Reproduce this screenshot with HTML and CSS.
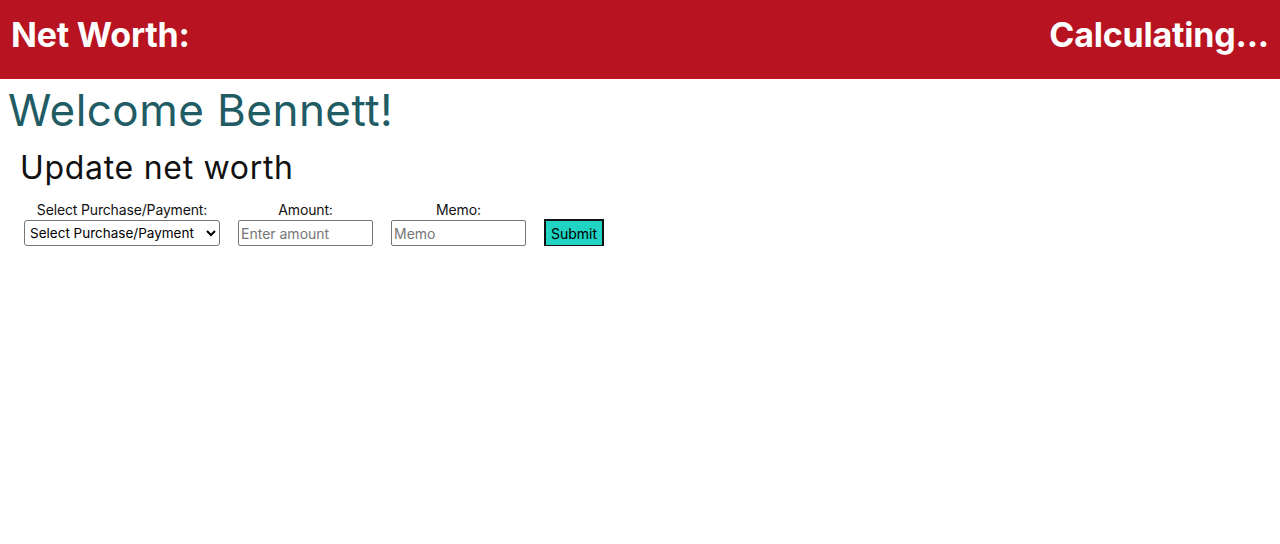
FILE: index.html
```html
<!DOCTYPE html>
<html>
<head>
<meta charset="utf-8">
<link rel="stylesheet" href="styles.css">
</head>
<body>
<header class="topbar">
  <h1 class="topbar-title">Net Worth:</h1>
  <h1 class="topbar-value">Calculating...</h1>
</header>
<main class="content">
  <h1 class="welcome">Welcome Bennett!</h1>
  <section class="update">
    <h2 class="update-title">Update net worth</h2>
    <form class="form">
      <div class="field">
        <label class="field-label">Select Purchase/Payment:</label>
        <select class="select">
          <option>Select Purchase/Payment</option>
        </select>
      </div>
      <div class="field">
        <label class="field-label">Amount:</label>
        <input class="input" type="text" placeholder="Enter amount">
      </div>
      <div class="field">
        <label class="field-label">Memo:</label>
        <input class="input" type="text" placeholder="Memo">
      </div>
      <div class="field field-submit">
        <button class="submit" type="button">Submit</button>
      </div>
    </form>
  </section>
</main>
</body>
</html>
```

FILE: styles.css
```css
html, body {
  margin: 0;
  padding: 0;
  background: #ffffff;
  font-family: Inter, "Liberation Sans", sans-serif;
}

.topbar {
  display: flex;
  justify-content: space-between;
  align-items: center;
  box-sizing: border-box;
  height: 79px;
  padding: 0 11px 10px 11px;
  background: #b71320;
  color: #ffffff;
}

.topbar-title,
.topbar-value {
  margin: 0;
  font-size: 34px;
  line-height: 40px;
  font-weight: 700;
  letter-spacing: -0.2px;
}

.content {
  padding: 0 8px;
}

.welcome {
  margin: 5px 0 0 0;
  font-size: 44px;
  font-weight: 400;
  color: #215b64;
  line-height: 52px;
  letter-spacing: 0.45px;
}

.update {
  padding: 0 12px;
}

.update-title {
  margin: 12px 0 0 0;
  font-size: 32px;
  font-weight: 400;
  color: #111111;
  line-height: 40px;
  letter-spacing: 0.7px;
}

.form {
  display: flex;
  align-items: flex-end;
  gap: 18px;
  margin-top: 13px;
  padding-left: 4px;
}

.field {
  display: flex;
  flex-direction: column;
  align-items: center;
}

.field-label {
  font-size: 14px;
  line-height: 17px;
  margin-bottom: 2px;
  color: #111111;
  letter-spacing: -0.15px;
}

.select {
  width: 196px;
  height: 26px;
  font-family: inherit;
  font-size: 13.5px;
  color: #000;
  background: #fff;
  border: 1px solid #767676;
  border-radius: 3px;
  padding: 0 1px;
}

.input {
  box-sizing: border-box;
  width: 135px;
  height: 26px;
  font-family: inherit;
  font-size: 14px;
  border: 1px solid #767676;
  border-radius: 2px;
  padding: 0 2px;
}

.input::placeholder {
  color: #757575;
}

.field-submit {
  margin-bottom: -1px;
}

.submit {
  box-sizing: border-box;
  width: 60px;
  height: 28px;
  font-family: inherit;
  font-size: 14px;
  color: #000;
  background: #20d3c2;
  border: 2px solid #111;
  border-radius: 0;
  padding: 0;
}
```
